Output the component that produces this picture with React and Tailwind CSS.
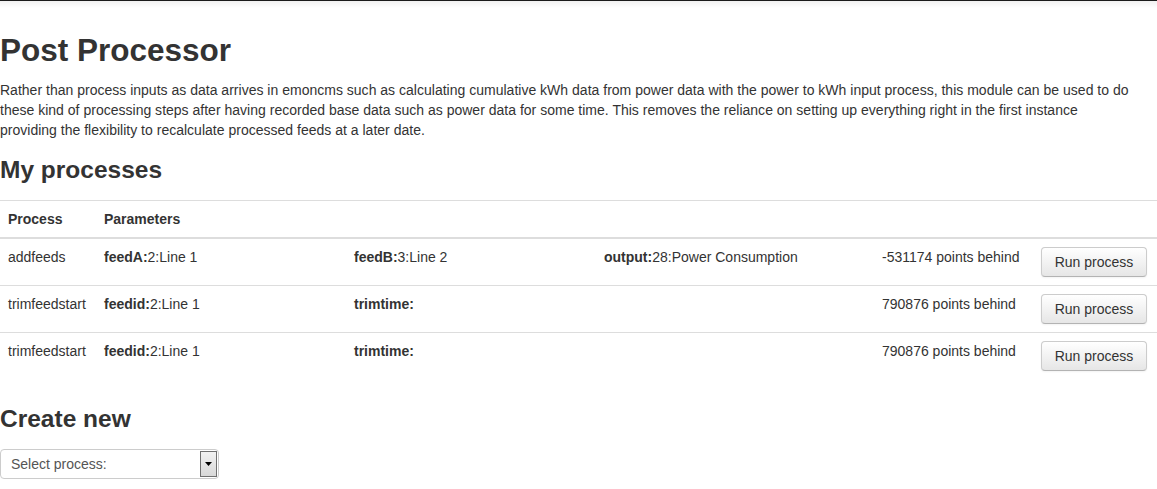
import React from 'react'

const processes = [
  {
    name: "addfeeds",
    params: [
      { key: "feedA", value: "2:Line 1" },
      { key: "feedB", value: "3:Line 2" },
      { key: "output", value: "28:Power Consumption" },
    ],
    behind: "-531174 points behind",
  },
  {
    name: "trimfeedstart",
    params: [
      { key: "feedid", value: "2:Line 1" },
      { key: "trimtime", value: "" },
    ],
    behind: "790876 points behind",
  },
  {
    name: "trimfeedstart",
    params: [
      { key: "feedid", value: "2:Line 1" },
      { key: "trimtime", value: "" },
    ],
    behind: "790876 points behind",
  },
]

function App() {
  return (
    <div className="min-h-screen bg-white text-[#333] text-[14px] leading-[20px]" style={{ fontFamily: '"Liberation Sans", Arial, sans-serif' }}>
      {/* navbar edge */}
      <div className="h-[1px] bg-[#1b1b1b]"></div>
      <div className="h-[7px] bg-gradient-to-b from-[#f1f1f1] to-white"></div>

      <div>
        <h1 className="mt-[22px] mb-[10px] text-[31.5px] leading-[40px] font-bold">Post Processor</h1>
        <p className="mb-[10px] max-w-[1130px] tracking-[0.01px]">
          Rather than process inputs as data arrives in emoncms such as calculating cumulative kWh data from power data with the power to kWh input process, this module can be used to do these kind of processing steps after having recorded base data such as power data for some time. This removes the reliance on setting up everything right in the first instance providing the flexibility to recalculate processed feeds at a later date.
        </p>

        <h3 className="mt-[10px] mb-[10px] text-[24.5px] leading-[40px] font-bold">My processes</h3>

        <table className="w-full table-fixed border-collapse mb-[20px]">
          <colgroup>
            <col className="w-[96px]" />
            <col className="w-[778px]" />
            <col className="w-[159px]" />
            <col className="w-[124px]" />
          </colgroup>
          <thead>
            <tr>
              <th className="p-[8px] text-left align-bottom border-t border-[#ddd]">Process</th>
              <th className="p-[8px] text-left align-bottom border-t border-[#ddd]">Parameters</th>
              <th className="p-[8px] border-t border-[#ddd]"></th>
              <th className="p-[8px] border-t border-[#ddd]"></th>
            </tr>
          </thead>
          <tbody>
            {processes.map((item, index) => {
              const top = index === 0 ? "border-t-2" : "border-t"
              return (
                <tr key={index}>
                  <td className={`p-[8px] align-top border-[#ddd] ${top}`}>{item.name}</td>
                  <td className={`p-[8px] align-top border-[#ddd] ${top}`}>
                    <div className="flex">
                      {item.params.map((p) => (
                        <div key={p.key} className="w-[250px] shrink-0">
                          <b>{p.key}:</b>{p.value}
                        </div>
                      ))}
                    </div>
                  </td>
                  <td className={`p-[8px] align-top border-[#ddd] ${top}`}>{item.behind}</td>
                  <td className={`p-[8px] align-top border-[#ddd] ${top}`}>
                    <button className="h-[30px] w-[106px] px-[12px] rounded-[4px] border border-[#ccc] border-b-[#b3b3b3] bg-gradient-to-b from-white to-[#e6e6e6] text-[#333] text-[14px] leading-[20px] shadow-[inset_0_1px_0_rgba(255,255,255,0.2),0_1px_2px_rgba(0,0,0,0.05)] whitespace-nowrap">
                      Run process
                    </button>
                  </td>
                </tr>
              )
            })}
          </tbody>
        </table>

        <h3 className="mt-[10px] mb-[10px] text-[24.5px] leading-[40px] font-bold">Create new</h3>

        <div className="relative w-[219px] h-[30px] rounded-[4px] border border-[#ccc] bg-white flex items-center">
          <span className="pl-[10px] text-[#555]">Select process:</span>
          <div className="absolute right-[1px] top-[1px] bottom-[1px] w-[17px] border border-[#707070] bg-gradient-to-b from-[#f2f2f2] to-[#d8d8d8] flex items-center justify-center">
            <svg width="7" height="4" viewBox="0 0 7 4">
              <path d="M0 0 L7 0 L3.5 4 Z" fill="#000" />
            </svg>
          </div>
        </div>
      </div>
    </div>
  )
}

export default App
